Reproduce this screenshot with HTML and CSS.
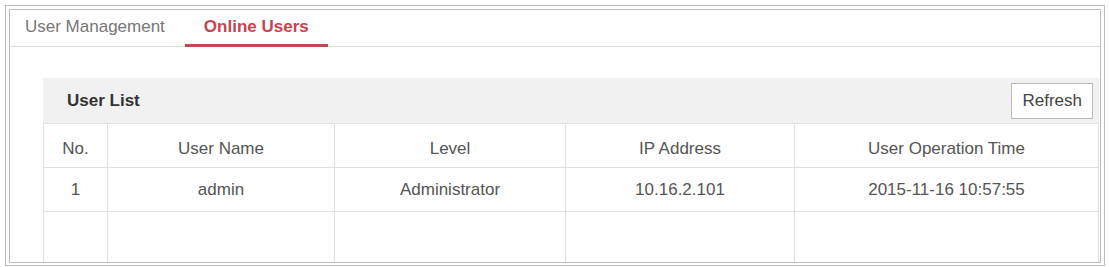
FILE: index.html
```html
<!DOCTYPE html>
<html lang="en">
<head>
    <meta charset="UTF-8">
    <meta name="viewport" content="width=device-width, initial-scale=1.0">
    <title>Online Users</title>
    <link rel="stylesheet" href="styles.css">
</head>
<body>
    <div class="frame">
        <div class="frame-inner">
            <div class="tabs">
                <div class="tab first">User Management</div>
                <div class="tab active">Online Users</div>
            </div>

            <div class="panel">
                <div class="panel-head">
                    <span class="panel-title">User List</span>
                    <button class="btn">Refresh</button>
                </div>
                <table class="user-table">
                    <colgroup>
                        <col class="c-no">
                        <col class="c-name">
                        <col class="c-level">
                        <col class="c-ip">
                        <col>
                    </colgroup>
                    <tr class="head">
                        <td>No.</td>
                        <td>User Name</td>
                        <td>Level</td>
                        <td>IP Address</td>
                        <td>User Operation Time</td>
                    </tr>
                    <tr>
                        <td>1</td>
                        <td>admin</td>
                        <td>Administrator</td>
                        <td>10.16.2.101</td>
                        <td>2015-11-16 10:57:55</td>
                    </tr>
                    <tr class="empty">
                        <td></td>
                        <td></td>
                        <td></td>
                        <td></td>
                        <td></td>
                    </tr>
                </table>
            </div>
        </div>
    </div>
</body>
</html>
```

FILE: styles.css
```css
body {
    margin: 0;
    background: #fff;
    font-family: 'Liberation Sans', Arial, sans-serif;
    font-size: 17px;
    color: #555;
}

.frame {
    margin: 5px 4px 0 5px;
    height: 254px;
    padding: 3px 3px 2px 3px;
    border: 1px solid #bdbdbd;
}

.frame-inner {
    height: 100%;
    box-sizing: border-box;
    border: 1px solid #bdbdbd;
    overflow: hidden;
}

.tabs {
    display: flex;
    height: 36px;
    border-bottom: 1px solid #ddd;
}

.tab {
    display: flex;
    align-items: center;
    padding: 0 19px;
    color: #777;
    margin-bottom: -1px;
    border-bottom: 3px solid transparent;
    box-sizing: border-box;
    height: 37px;
}

.tab.first {
    padding: 0 20px 0 15px;
}

.tab.active {
    color: #c9434f;
    font-weight: bold;
    border-bottom-color: #c4474f;
}

.panel {
    margin: 31px 1px 0 33px;
}

.panel-head {
    display: flex;
    align-items: center;
    justify-content: space-between;
    height: 45px;
    padding: 0 6px 0 24px;
    background: #f1f1f1;
    border-bottom: 1px solid #e2e2e2;
}

.panel-title {
    font-weight: bold;
    color: #333;
}

.btn {
    height: 36px;
    padding: 0 10px;
    background: #fff;
    border: 1px solid #bbb;
    font-family: inherit;
    font-size: 17px;
    color: #444;
}

.user-table {
    width: 100%;
    border-collapse: collapse;
    table-layout: fixed;
}

.user-table td {
    height: 43px;
    padding: 0;
    text-align: center;
    border: 1px solid #e0e0e0;
    border-top: none;
}

.user-table .head td {
    height: 37px;
    padding-top: 6px;
}

.user-table .empty td {
    height: 60px;
}

.c-no { width: 64px; }
.c-name { width: 227px; }
.c-level { width: 231px; }
.c-ip { width: 229px; }
```
